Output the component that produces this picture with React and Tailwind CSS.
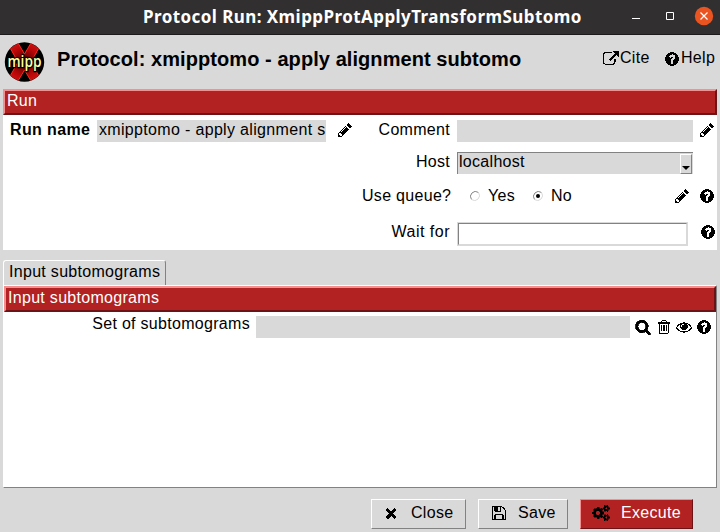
const ICONS = {
  pencil: "M491 1536l91-91-235-235-91 91v107h128v128h107zm523-928q0-22-22-22-10 0-17 7l-542 542q-7 7-7 17 0 22 22 22 10 0 17-7l542-542q7-7 7-17zm-54-192l416 416-832 832h-416v-416zm683 96q0 53-37 90l-166 166-416-416 166-165q36-38 90-38 53 0 91 38l235 234q37 39 37 91z",
  question: "M1024 1376v-192q0-14-9-23t-23-9h-192q-14 0-23 9t-9 23v192q0 14 9 23t23 9h192q14 0 23-9t9-23zm256-672q0-88-55.5-163t-138.5-116-170-41q-243 0-371 213-15 24 8 42l132 100q7 6 19 6 16 0 25-12 53-68 86-92 34-24 86-24 48 0 85.5 26t37.5 59q0 38-20 61t-68 45q-63 28-115.5 86.5t-52.5 125.5v36q0 14 9 23t23 9h192q14 0 23-9t9-23q0-19 21.5-49.5t54.5-49.5q32-18 49-28.5t46-35 44.5-48 28-60.5 12.5-81zm384 192q0 209-103 385.5t-279.5 279.5-385.5 103-385.5-103-279.5-279.5-103-385.5 103-385.5 279.5-279.5 385.5-103 385.5 103 279.5 279.5 103 385.5z",
  search: "M1216 832q0-185-131.5-316.5t-316.5-131.5-316.5 131.5-131.5 316.5 131.5 316.5 316.5 131.5 316.5-131.5 131.5-316.5zm512 832q0 52-38 90t-90 38q-54 0-90-38l-343-342q-179 124-399 124-143 0-273.5-55.5t-225-150-150-225-55.5-273.5 55.5-273.5 150-225 225-150 273.5-55.5 273.5 55.5 225 150 150 225 55.5 273.5q0 220-124 399l343 343q37 37 37 90z",
  trash: "M704 736v576q0 14-9 23t-23 9h-64q-14 0-23-9t-9-23v-576q0-14 9-23t23-9h64q14 0 23 9t9 23zm256 0v576q0 14-9 23t-23 9h-64q-14 0-23-9t-9-23v-576q0-14 9-23t23-9h64q14 0 23 9t9 23zm256 0v576q0 14-9 23t-23 9h-64q-14 0-23-9t-9-23v-576q0-14 9-23t23-9h64q14 0 23 9t9 23zm128 724v-948h-896v948q0 22 7 40.5t14.5 27 10.5 8.5h832q3 0 10.5-8.5t14.5-27 7-40.5zm-672-1076h448l-48-117q-7-9-17-11h-317q-10 2-17 11zm928 32v64q0 14-9 23t-23 9h-96v948q0 83-47 143.5t-113 60.5h-832q-66 0-113-58.5t-47-141.5v-952h-96q-14 0-23-9t-9-23v-64q0-14 9-23t23-9h309l70-167q15-37 54-63t79-26h320q40 0 79 26t54 63l70 167h309q14 0 23 9t9 23z",
  eye: "M1664 960q-152-236-381-353 61 104 61 225 0 185-131.5 316.5t-316.5 131.5-316.5-131.5-131.5-316.5q0-121 61-225-229 117-381 353 133 205 333.5 326.5t434.5 121.5 434.5-121.5 333.5-326.5zm-720-384q0-20-14-34t-34-14q-125 0-214.5 89.5t-89.5 214.5q0 20 14 34t34 14 34-14 14-34q0-86 61-147t147-61q20 0 34-14t14-34zm848 384q0 34-20 69-140 230-376.5 368.5t-499.5 138.5-499.5-139-376.5-368q-20-35-20-69t20-69q140-229 376.5-368t499.5-139 499.5 139 376.5 368q20 35 20 69z",
  times: "M1490 1322q0 40-28 68l-136 136q-28 28-68 28t-68-28l-294-294-294 294q-28 28-68 28t-68-28l-136-136q-28-28-28-68t28-68l294-294-294-294q-28-28-28-68t28-68l136-136q28-28 68-28t68 28l294 294 294-294q28-28 68-28t68 28l136 136q28 28 28 68t-28 68l-294 294 294 294q28 28 28 68z",
  floppy: "M512 1536h768v-384h-768v384zm896 0h128v-896q0-14-10-38.5t-20-34.5l-281-281q-10-10-34-20t-39-10v416q0 40-28 68t-68 28h-576q-40 0-68-28t-28-68v-416h-128v1280h128v-416q0-40 28-68t68-28h832q40 0 68 28t28 68v416zm-384-928v-320q0-13-9.5-22.5t-22.5-9.5h-192q-13 0-22.5 9.5t-9.5 22.5v320q0 13 9.5 22.5t22.5 9.5h192q13 0 22.5-9.5t9.5-22.5zm640 32v928q0 40-28 68t-68 28h-1344q-40 0-68-28t-28-68v-1344q0-40 28-68t68-28h928q40 0 88 20t76 48l280 280q28 28 48 76t20 88z",
  link: "M1408 928v320q0 119-84.500 203.500t-203.500 84.500h-832q-119 0-203.500-84.500t-84.500-203.500v-832q0-119 84.500-203.500t203.500-84.500h704q14 0 23 9t9 23v64q0 14-9 23t-23 9h-704q-66 0-113 47t-47 113v832q0 66 47 113t113 47h832q66 0 113-47t47-113v-320q0-14 9-23t23-9h64q14 0 23 9t9 23zm384-864v512q0 26-19 45t-45 19-45-19l-176-176-652 652q-10 10-23 10t-23-10l-114-114q-10-10-10-23t10-23l652-652-176-176q-19-19-19-45t19-45 45-19h512q26 0 45 19t19 45z",
  cogs: "M832 896q0-106-75-181t-181-75-181 75-75 181 75 181 181 75 181-75 75-181zm768 512q0-52-38-90t-90-38-90 38-38 90q0 53 37.500 90.500t90.500 37.500 90.500-37.500 37.500-90.500zm0-1024q0-52-38-90t-90-38-90 38-38 90q0 53 37.500 90.500t90.500 37.500 90.500-37.500 37.500-90.500zm-384 421v185q0 10-7 19.500t-16 10.500l-155 24q-11 35-32 76 34 48 90 115 7 11 7 20 0 12-7 19-23 30-82.500 89.500t-78.500 59.500q-11 0-21-7l-115-90q-37 19-77 31-11 108-23 155-7 24-30 24h-186q-11 0-20-7.500t-10-17.500l-23-153q-34-10-75-31l-118 89q-7 7-20 7-11 0-21-8-144-133-144-160 0-9 7-19 10-14 41-53t47-61q-23-44-35-82l-152-24q-10-1-17-9.500t-7-19.500v-185q0-10 7-19.500t16-10.500l155-24q11-35 32-76-34-48-90-115-7-11-7-20 0-12 7-20 22-30 82-89t79-59q11 0 21 7l115 90q34-18 77-32 11-108 23-154 7-24 30-24h186q11 0 20 7.500t10 17.500l23 153q34 10 75 31l118-89q8-7 20-7 11 0 21 8 144 133 144 160 0 8-7 19-12 16-42 54t-45 60q23 48 34 82l152 23q10 2 17 10.500t7 19.500zm640 533v140q0 16-149 31-12 27-30 52 51 113 51 138 0 4-4 7-122 71-124 71-8 0-46-47t-52-68q-20 2-30 2t-30-2q-14 21-52 68t-46 47q-2 0-124-71-4-3-4-7 0-25 51-138-18-25-30-52-149-15-149-31v-140q0-16 149-31 13-29 30-52-51-113-51-138 0-4 4-7 4-2 35-20t59-34 30-16q8 0 46 46.500t52 67.500q20-2 30-2t30 2q51-71 92-112l6-2q4 0 124 70 4 3 4 7 0 25-51 138 17 23 30 52 149 15 149 31zm0-1024v140q0 16-149 31-12 27-30 52 51 113 51 138 0 4-4 7-122 71-124 71-8 0-46-47t-52-68q-20 2-30 2t-30-2q-14 21-52 68t-46 47q-2 0-124-71-4-3-4-7 0-25 51-138-18-25-30-52-149-15-149-31v-140q0-16 149-31 13-29 30-52-51-113-51-138 0-4 4-7 4-2 35-20t59-34 30-16q8 0 46 46.500t52 67.500q20-2 30-2t30 2q51-71 92-112l6-2q4 0 124 70 4 3 4 7 0 25-51 138 17 23 30 52 149 15 149 31z",
};

function Icon({ name, className = "" }) {
  return (
    <svg viewBox="0 0 1792 1792" shapeRendering="crispEdges" fill="currentColor" className={`size-4 shrink-0 overflow-visible ${className}`}>
      <path d={ICONS[name]} />
    </svg>
  );
}

function Logo() {
  return (
    <svg viewBox="0 0 40 40" className="mt-[7px] ml-[5px] size-10 shrink-0 overflow-visible">
      <defs>
        <clipPath id="disc"><circle cx="19.500" cy="20" r="19.500" /></clipPath>
        <radialGradient id="glow" gradientUnits="userSpaceOnUse" cx="19.500" cy="20" r="20">
          <stop offset="0" stopColor="#400" />
          <stop offset="0.700" stopColor="#b80808" />
          <stop offset="1" stopColor="#d01010" />
        </radialGradient>
      </defs>
      <circle cx="19.500" cy="20" r="19.700" fill="#000" />
      <g clipPath="url(#disc)" fill="url(#glow)" stroke="#ff2a1c" strokeWidth="1">
        <path d="M4 4L13 1L19.500 12L26 1L35 4L26 20L35 36L26 39L19.500 28L13 39L4 36L13 20Z" />
      </g>
      <text x="2.500" y="24.500" textLength="34" lengthAdjust="spacingAndGlyphs" fontFamily="Open Sans, sans-serif" fontWeight="600" fontSize="16.500" letterSpacing="0" fill="#ffffa0" stroke="#000" strokeWidth="2.500" paintOrder="stroke">mipp</text>
    </svg>
  );
}

const RED = "border-2 border-t-[#f68f8f] border-l-[#f68f8f] border-r-[#6b1316] border-b-[#6b1316] bg-[#b22222] text-white";

function Bar({ children }) {
  return <div className={`flex h-[26px] shrink-0 items-start pl-0.5 leading-5 ${RED}`}>{children}</div>;
}

function Button({ icon, children, className }) {
  return (
    <button className={`flex h-[30px] items-start pt-[3px] ${className}`}>
      <Icon name={icon} className="mt-0.5" />
      <span>{children}</span>
    </button>
  );
}

const GRAY = "border border-t-white border-l-white border-r-[#828282] border-b-[#828282]";

export default function App() {
  return (
    <div className="flex h-[532px] w-[720px] flex-col overflow-hidden bg-[#d9d9d9] font-['Liberation_Sans',Arial,sans-serif] text-[16px] leading-5 tracking-[0.3px] whitespace-nowrap text-black">
      <header className="flex h-[35px] shrink-0 border-b border-[#1c1a1b] bg-[#322f30] text-white">
        <h1 className="ml-[143px] w-[481px] font-['Noto_Sans','Open_Sans',sans-serif] text-[17px] leading-[34px] font-bold tracking-[0.43px]">Protocol Run: XmippProtApplyTransformSubtomo</h1>
        <svg viewBox="0 0 96 34" className="h-[34px] w-24" fill="none" stroke="#fff">
          <path d="M8 18.500h8" />
          <path d="M42.500 12.500h7v7h-7z" />
          <circle cx="80" cy="16" r="9.200" fill="#e95420" stroke="none" />
          <path d="M76.500 12.500l7 7M83.500 12.500l-7 7" strokeWidth="1.200" />
        </svg>
      </header>

      <div className="flex h-[54px] shrink-0">
        <Logo />
        <h2 className="mt-3 ml-3 w-[546px] text-[20px] leading-6 font-bold tracking-[0.07px]">Protocol: xmipptomo - apply alignment subtomo</h2>
        <Icon name="link" className="mt-4" />
        <span className="mt-[13px] w-[45px] pl-px">Cite</span>
        <Icon name="question" className="mt-4" />
        <span className="mt-[13px] pl-px">Help</span>
      </div>

      <section className="mx-[3px] flex h-[161px] shrink-0 flex-col bg-white">
        <Bar>Run</Bar>
        <div className="flex">
          <div className="flex w-[359px] pt-[5px]">
            <b className="ml-[7px] w-[87px] tracking-[0.37px]">Run name</b>
            <div className="h-[22px] w-[229px] overflow-hidden bg-[#d9d9d9] pl-0.5 tracking-[0.33px]">xmipptomo - apply alignment s</div>
            <Icon name="pencil" className="mt-0.5 ml-[11px]" />
          </div>
          <div className="flex flex-col">
            <div className="flex h-[37px] pt-[5px]">
              <span className="w-[88px] text-right">Comment</span>
              <div className="ml-[7px] h-[22px] w-[236px] bg-[#d9d9d9]" />
              <Icon name="pencil" className="mt-0.5 ml-[6px]" />
            </div>
            <div className="flex h-[34px]">
              <span className="w-[88px] text-right">Host</span>
              <div className="ml-[7px] flex h-[22px] w-[236px] justify-between border-t border-l border-[#828282] bg-[#d9d9d9] pr-px pl-px">
                <span className="-mt-px">localhost</span>
                <div className="mt-px flex h-5 w-3 items-end justify-center border border-t-white border-l-white border-r-[#828282] border-b-[#828282]">
                  <svg viewBox="0 0 8 4" className="mb-[3px] h-1 w-2"><path d="M0 0h8L4 4z" /></svg>
                </div>
              </div>
            </div>
            <div className="flex h-[36px]">
              <span className="w-[88px] text-right">Use queue?</span>
              <Radio className="ml-5" />
              <span className="ml-2 w-[45px]">Yes</span>
              <Radio checked />
              <span className="ml-2 w-[123px]">No</span>
              <Icon name="pencil" className="mt-0.5" />
              <Icon name="question" className="mt-0.5 ml-[9px]" />
            </div>
            <div className="flex">
              <span className="w-[88px] text-right tracking-[0.5px]">Wait for</span>
              <div className="ml-[7px] h-[24px] w-[231px] border border-[#d9d9d9]">
                <div className="h-full border border-t-[#828282] border-r-[#d9d9d9] border-b-[#d9d9d9] border-l-[#828282]" />
              </div>
              <Icon name="question" className="mt-0.5 ml-3" />
            </div>
          </div>
        </div>
      </section>

      <nav className="mt-[10px] ml-[3px] flex h-[25px] shrink-0">
        <div className="h-[26px] w-[163px] rounded-t-[3px] border border-b-0 border-t-white border-r-[#828282] border-l-white pt-px pl-[5px]">Input subtomograms</div>
      </nav>
      <section className={`mx-[3px] flex h-[203px] shrink-0 flex-col bg-white ${GRAY}`}>
        <Bar>Input subtomograms</Bar>
        <div className="flex pt-1">
          <span className="-mt-0.5 w-[246px] text-right">Set of subtomograms</span>
          <div className="ml-[6px] h-[22px] w-[374px] bg-[#d9d9d9]" />
          <Icon name="search" className="mt-[3px] ml-[5px] stroke-black [stroke-width:90]" />
          <Icon name="trash" className="mt-[3px] ml-[5px]" />
          <Icon name="eye" className="mt-[3px] ml-1" />
          <Icon name="question" className="mt-[3px] ml-1" />
        </div>
      </section>

      <footer className="mt-[11px] ml-[371px] flex gap-3">
        <Button icon="times" className={`w-[95px] gap-3 pl-[11px] ${GRAY}`}>Close</Button>
        <Button icon="floppy" className={`w-[90px] gap-[11px] pl-3 ${GRAY}`}>Save</Button>
        <Button icon="cogs" className="w-[113px] gap-3 border border-t-[#f68f8f] border-r-[#6b1316] border-b-[#6b1316] border-l-[#f68f8f] bg-[#b22222] pl-3 text-white [&>svg]:text-black [&>svg]:stroke-black [&>svg]:[stroke-width:50]">Execute</Button>
      </footer>
    </div>
  );
}

function Radio({ checked = false, className = "" }) {
  return (
    <svg viewBox="0 0 10 10" className={`mt-[5px] size-2.5 shrink-0 ${className}`} fill="none">
      <path d="M1.500 8.500A5 5 0 0 1 8.500 1.500" stroke="#858585" />
      <path d="M8.500 1.500A5 5 0 0 1 1.500 8.500" stroke="#d9d9d9" />
      {checked && <circle cx="5" cy="5" r="2" fill="#000" />}
    </svg>
  );
}
